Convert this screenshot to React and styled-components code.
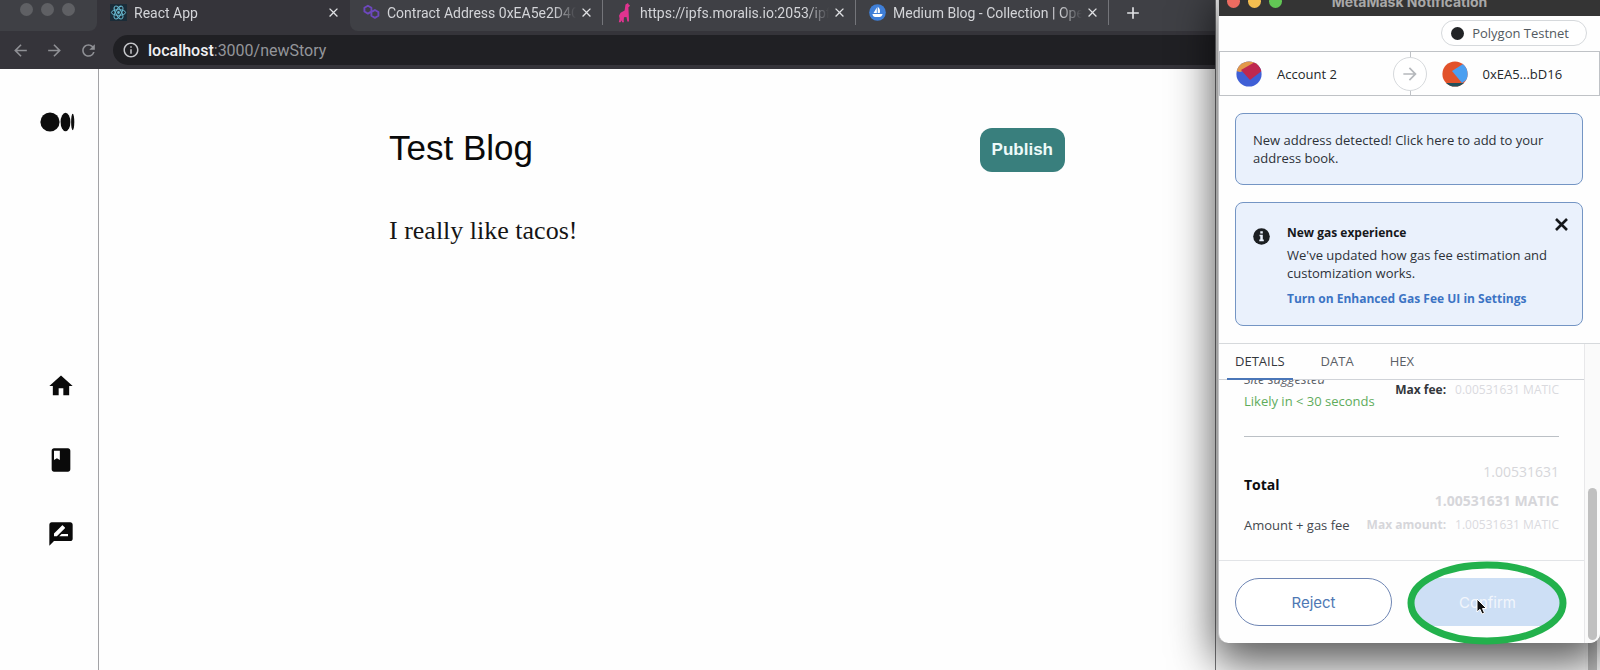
import React, { useState } from 'react';
import styled, { createGlobalStyle } from 'styled-components';
import { MdHome, MdBook, MdRateReview, MdRefresh, MdArrowBack, MdArrowForward, MdInfoOutline, MdClose, MdAdd } from 'react-icons/md';

const GlobalStyle = createGlobalStyle`
  * {
    box-sizing: border-box;
  }

  body {
    margin: 0;
    overflow: hidden;
    background: #fefefe;
    font-family: Roboto, "Liberation Sans", sans-serif;
  }

  button, input, textarea {
    font-family: inherit;
  }
`;

const Desktop = styled.div`
  display: flex;
  position: relative;
  min-height: 100vh;
  overflow: hidden;
`;

/* browser */

const Browser = styled.div`
  display: flex;
  flex-direction: column;
  flex: 1;
  min-width: 0;
  min-height: 100vh;
  border-right: 1px solid #77777a;
`;

const TabStrip = styled.div`
  display: flex;
  height: 31px;
  background: #35343a;
`;

const WindowControls = styled.div`
  display: flex;
  gap: 8px;
  width: 97px;
  padding: 3px 0 0 20px;
  background: #3f4045;
  border-bottom-right-radius: 8px;
`;

const Dot = styled.span`
  width: 13px;
  height: 13px;
  border-radius: 50%;
  background: ${({ color }) => color};
`;

const InactiveTabs = styled.div`
  display: flex;
  flex: 1;
  min-width: 0;
  background: #3f4045;
  border-bottom-left-radius: 8px;
`;

const BrowserTab = styled.div`
  display: flex;
  align-items: center;
  flex: 0 0 253px;
  min-width: 0;
  height: 25px;
  padding: 0 8px 0 13px;
  color: #d3d4d8;
  font-size: 14px;
  border-right: 1px solid ${({ $divided }) => ($divided ? '#74757a' : 'transparent')};
`;

const TabTitle = styled.span`
  flex: 1;
  min-width: 0;
  margin: 0 3px 0 7px;
  overflow: hidden;
  white-space: nowrap;
  mask-image: linear-gradient(to right, #000 88%, transparent);
`;

const IconButton = styled.button`
  display: flex;
  align-items: center;
  justify-content: center;
  padding: 0;
  border: none;
  background: none;
  color: ${({ color }) => color || 'inherit'};
`;

const NewTabButton = styled(IconButton)`
  width: 48px;
  height: 25px;
`;

const Toolbar = styled.div`
  display: flex;
  align-items: center;
  height: 38px;
  gap: 15px;
  padding: 0 0 0 11px;
  background: #35343a;
`;

const AddressBar = styled.div`
  display: flex;
  align-items: center;
  flex: 1;
  gap: 8px;
  height: 30px;
  padding-left: 9px;
  border-radius: 15px 0 0 15px;
  background: #202024;
  color: #c4c5c9;
`;

const Address = styled.span`
  font-size: 16px;
  color: #94959a;

  b {
    color: #f1f1f4;
    font-weight: 500;
  }
`;

const Page = styled.div`
  display: flex;
  flex: 1;
`;

const Sidebar = styled.nav`
  display: flex;
  flex-direction: column;
  align-items: center;
  width: 99px;
  padding: 43px 0 0 23px;
  border-right: 1px solid #a3a3a6;
  color: #0a0a0a;
`;

const SideLinks = styled.div`
  display: flex;
  flex-direction: column;
  gap: 46px;
  margin-top: 240px;
`;

const SideLink = styled.a`
  display: flex;
  color: inherit;
`;

const Story = styled.main`
  display: flex;
  align-items: flex-start;
  width: 676px;
  margin-left: 290px;
  padding-top: 59px;
`;

const StoryFields = styled.div`
  display: flex;
  flex-direction: column;
  flex: 1;
  gap: 40px;
`;

const TitleInput = styled.input`
  width: 100%;
  height: 40px;
  padding: 0;
  border: none;
  outline: none;
  background: none;
  color: #0a0a0a;
  font-family: "Liberation Sans", Arial, sans-serif;
  font-size: 35px;
`;

const StoryInput = styled.textarea`
  width: 100%;
  height: 60px;
  padding: 0;
  border: none;
  outline: none;
  resize: none;
  background: none;
  color: #151515;
  font-family: "Liberation Serif", serif;
  font-size: 26px;
  line-height: 46px;
`;

const PublishButton = styled.button`
  height: 44px;
  padding: 0 12px;
  border: none;
  border-radius: 12px;
  background: #397f7d;
  color: #eefafa;
  font-family: "Liberation Sans", Arial, sans-serif;
  font-size: 17px;
  font-weight: bold;
`;

/* the window that shows below the wallet */

const BackWindow = styled.div`
  display: flex;
  justify-content: flex-end;
  width: 384px;
  background: #fefefe;
`;

/* wallet window */

const WalletWindow = styled.section`
  position: absolute;
  top: -12px;
  right: 0;
  width: 382px;
  border-left: 1px solid #c4c4c6;
  border-radius: 10px;
  background: #fefefe;
  box-shadow: 0 16px 44px 4px rgba(0, 0, 0, 0.65);
  overflow: hidden;
  font-family: "Open Sans", "Liberation Sans", sans-serif;
`;

const WalletTitleBar = styled.header`
  display: grid;
  grid-template-columns: 1fr auto 1fr;
  align-items: center;
  height: 28px;
  padding: 0 8px 2px;
  background: #343434;
  color: #a8a8a8;
  font-family: Inter, "Liberation Sans", sans-serif;
  font-size: 14px;
  font-weight: 700;
`;

const Lights = styled.div`
  display: flex;
  gap: 8px;
`;

const NetworkRow = styled.div`
  display: flex;
  justify-content: flex-end;
  padding: 4px 13px 5px;
`;

const NetworkPill = styled.button`
  display: flex;
  align-items: center;
  gap: 8px;
  height: 26px;
  padding: 0 17px 0 9px;
  border: 1px solid #d6d9dc;
  border-radius: 13px;
  background: #fff;
  color: #535a61;
  font-size: 13px;
`;

const AccountsRow = styled.div`
  display: grid;
  grid-template-columns: 1fr 1fr;
  position: relative;
  height: 45px;
  border: 1px solid #bfc2c6;
`;

const Account = styled.div`
  display: flex;
  align-items: center;
  gap: 15px;
  padding-left: ${({ $recipient }) => ($recipient ? '31px' : '16px')};
  border-left: ${({ $recipient }) => ($recipient ? '1px solid #bfc2c6' : 'none')};
  color: #24272a;
  font-size: 13px;
`;

const ArrowCircle = styled.div`
  position: absolute;
  top: 5px;
  left: calc(50% - 17px);
  display: flex;
  align-items: center;
  justify-content: center;
  width: 34px;
  height: 34px;
  border: 1px solid #d6d9dc;
  border-radius: 50%;
  background: #fff;
  color: #b5b8bc;
`;

const Notices = styled.div`
  display: flex;
  flex-direction: column;
  gap: 17px;
  padding: 17px 17px 17px 16px;
`;

const Notice = styled.div`
  display: flex;
  align-items: flex-start;
  position: relative;
  gap: 17px;
  padding: ${({ $tall }) => ($tall ? '21px 30px 17px 17px' : '17px')};
  border: 1px solid #7495c4;
  border-radius: 8px;
  background: #eaf1fc;
  color: #2d3138;
  font-size: 13px;
  line-height: 18px;
`;

const NoticeBody = styled.div`
  flex: 1;

  h3, p {
    margin: 0 0 4px;
    font-size: 13px;
  }

  h3 {
    color: #16181b;
    font-size: 12px;
  }

  p {
    margin-bottom: 8px;
  }
`;

const SettingsLink = styled.a`
  display: block;
  color: #3c74c4;
  font-size: 12px;
  font-weight: 700;
  text-decoration: none;
`;

const DismissButton = styled(IconButton)`
  position: absolute;
  top: 15px;
  right: 14px;
`;

const InfoIcon = styled.svg`
  margin-top: 4px;
`;

const ScrollArea = styled.div`
  display: flex;
  border-top: 1px solid #d6d9dc;
`;

const ScrollContent = styled.div`
  flex: 1;
  min-width: 0;
  border-right: 1px solid #e8e8ea;
`;

const ScrollTrack = styled.div`
  display: flex;
  align-items: flex-end;
  width: 15px;
  padding: 0 3px ${({ $flush }) => ($flush ? '0' : '3px')};
  background: #fafafa;
`;

const ScrollThumb = styled.div`
  width: 9px;
  height: 152px;
  border-radius: 5px;
  background: #c0c0c0;
`;

const BackThumb = styled(ScrollThumb)`
  border-radius: 5px 5px 0 0;
`;

const DetailTabs = styled.div`
  display: flex;
  gap: 20px;
  height: 36px;
  padding-left: 8px;
  border-bottom: 1px solid #d0d3d8;
`;

const DetailTab = styled.button`
  height: 36px;
  padding: 0 8px;
  border: none;
  border-bottom: 2px solid ${({ $active }) => ($active ? '#4a76b8' : 'transparent')};
  background: none;
  color: ${({ $active }) => ($active ? '#33373c' : '#5b6067')};
  font-size: 13px;
`;

const Details = styled.div`
  height: 180px;
  padding: 0 25px;
  overflow: hidden;
  font-size: 13px;
  line-height: 18px;
  white-space: nowrap;
  color: #44484e;
`;

const GasBlock = styled.div`
  display: flex;
  justify-content: space-between;
  height: 57px;
  border-bottom: 1px solid #bbc0c5;
`;

const GasTiming = styled.div`
  display: flex;
  flex-direction: column;
  gap: 4px;
  margin-top: -10px;
  color: #5fac5c;

  i {
    color: #5b6067;
  }
`;

const Fee = styled.div`
  display: flex;
  gap: 9px;
  color: #dadade;
  font-size: 12px;
  line-height: 20px;

  b {
    color: ${({ $faded }) => ($faded ? '#d6d6da' : '#33373c')};
  }
`;

const TotalBlock = styled.div`
  display: flex;
  flex-direction: column;
  gap: 4px;
  padding-top: 25px;
`;

const TotalRow = styled.div`
  display: flex;
  align-items: center;
  justify-content: space-between;
`;

const Amounts = styled.div`
  display: flex;
  flex-direction: column;
  align-items: flex-end;
  gap: 9px;
`;

const Amount = styled.span`
  color: #d6d6da;
  font-size: 14px;
  line-height: 20px;
  font-weight: ${({ $bold }) => ($bold ? 700 : 400)};
`;

const TotalLabel = styled(Amount)`
  padding-bottom: 4px;
  color: #0c0d0e;
`;

const WalletFooter = styled.footer`
  display: grid;
  grid-template-columns: 1fr 1fr;
  gap: 17px;
  padding: 17px 18px 17px 16px;
  border-top: 1px solid #e2e4e7;
`;

const FooterButton = styled.button`
  height: 48px;
  border: 1px solid ${({ $primary }) => ($primary ? '#cddff5' : '#6f86b4')};
  border-radius: 24px;
  background: ${({ $primary }) => ($primary ? '#cddff5' : '#fff')};
  color: ${({ $primary }) => ($primary ? '#f2f6fc' : '#4f78b4')};
  font-family: Inter, "Liberation Sans", sans-serif;
  font-size: 15px;
`;

const Highlight = styled.svg`
  position: absolute;
  right: 33px;
  top: 561px;
`;

const Cursor = styled.svg`
  position: absolute;
  right: 112px;
  top: 598px;
`;

const ReactIcon = () => (
  <svg width="17" height="17" viewBox="0 0 24 24" fill="none" stroke="#68b9d0" strokeWidth="1.4">
    <rect width="24" height="24" fill="#1b2c38" stroke="none" />
    <circle cx="12" cy="12" r="2" fill="#68b9d0" stroke="none" />
    <ellipse cx="12" cy="12" rx="10" ry="4" />
    <ellipse cx="12" cy="12" rx="10" ry="4" transform="rotate(60 12 12)" />
    <ellipse cx="12" cy="12" rx="10" ry="4" transform="rotate(120 12 12)" />
  </svg>
);

const PolygonIcon = () => (
  <svg width="17" height="17" viewBox="0 0 18 18" fill="none" stroke="#6d48bd" strokeWidth="2" strokeLinejoin="round" strokeLinecap="round">
    <path d="M7.800 8.600 5.200 10.200 1.500 8V4L5.200 1.800 8.900 4v8.500l3.700 2.200 3.700-2.200v-4l-3.700-2.200L10.200 7.800" />
  </svg>
);

const MoralisIcon = () => (
  <svg width="17" height="20" viewBox="0 0 17 20" fill="#e0338f">
    <path d="M9.500 1.500 12 0l.6 1.500 1.400.8-.8 1.500-.8.400.400 8.300.200 6h-1.700l-.8-4.500-2.500.200-.3 3.300.3 1.800H6l-.2-2-1.300 2H2.800l.8-3.800-.6-2.800 1.600-3 4-2.200z" />
  </svg>
);

const OpenSeaIcon = () => (
  <svg width="17" height="17" viewBox="0 0 18 18">
    <circle cx="9" cy="9" r="8.800" fill="#3f7fd8" />
    <path d="M8.300 3.600v6H4.800zM9.200 3c2.200 1.600 3 4 2.200 6.500H9.200zM3.600 10.500h10.800c-.5 2-1.600 3.200-3.200 3.200H6.600c-1.600 0-2.600-1.200-3-3.200z" fill="#fff" />
  </svg>
);

const MediumLogo = () => (
  <svg width="42" height="20" viewBox="0 0 42 20" fill="#0d0d0d">
    <circle cx="10" cy="10" r="9.600" />
    <ellipse cx="25.500" cy="10" rx="4.900" ry="9.300" />
    <ellipse cx="32.700" cy="10" rx="1.600" ry="8.300" />
  </svg>
);

const SenderAvatar = () => (
  <svg width="26" height="26" viewBox="0 0 26 26">
    <clipPath id="sender"><circle cx="13" cy="13" r="12.600" /></clipPath>
    <g clipPath="url(#sender)">
      <rect width="26" height="26" fill="#3f5fd6" />
      <path d="M0 0h26v4L4 11 0 10z" fill="#e2984a" />
      <path d="M5 9 19 1l8 8-13 10z" fill="#bf2850" />
    </g>
  </svg>
);

const RecipientAvatar = () => (
  <svg width="26" height="26" viewBox="0 0 26 26">
    <clipPath id="recipient"><circle cx="13" cy="13" r="12.600" /></clipPath>
    <g clipPath="url(#recipient)">
      <rect width="26" height="26" fill="#e2522a" />
      <path d="M21 3 10 10l10 12 6-4V3z" fill="#4c9ff0" />
      <path d="M0 22h26v4H0z" fill="#21505c" />
    </g>
  </svg>
);

const tabs = [
  { title: 'Contract Address 0xEA5e2D4C', icon: <PolygonIcon /> },
  { title: 'https://ipfs.moralis.io:2053/ipfs', icon: <MoralisIcon /> },
  { title: 'Medium Blog - Collection | Ope', icon: <OpenSeaIcon /> },
];

const Tab = ({ title, icon, divided }) => (
  <BrowserTab $divided={divided}>
    {icon}
    <TabTitle>{title}</TabTitle>
    <IconButton aria-label={`Close ${title}`} color="#e0e1e4"><MdClose size={15} /></IconButton>
  </BrowserTab>
);

const Wallet = () => (
  <WalletWindow>
    <WalletTitleBar>
      <Lights>
        <Dot color="#ec6b60" />
        <Dot color="#f4be50" />
        <Dot color="#62c655" />
      </Lights>
      MetaMask Notification
    </WalletTitleBar>
    <NetworkRow>
      <NetworkPill><Dot color="#222426" />Polygon Testnet</NetworkPill>
    </NetworkRow>
    <AccountsRow>
      <Account><SenderAvatar />Account 2</Account>
      <Account $recipient><RecipientAvatar />0xEA5...bD16</Account>
      <ArrowCircle><MdArrowForward size={20} /></ArrowCircle>
    </AccountsRow>
    <Notices>
      <Notice>New address detected! Click here to add to your address book.</Notice>
      <Notice $tall>
        <InfoIcon width="17" height="17" viewBox="0 0 17 17">
          <circle cx="8.500" cy="8.500" r="8.300" fill="#1c1f22" />
          <path d="M7.300 3.300h2.500v2.200H7.300zM6.500 6.800h3.300v4.700h1v1.700H6.300v-1.700h1V8.300h-.8z" fill="#eaf1fc" />
        </InfoIcon>
        <NoticeBody>
          <h3>New gas experience</h3>
          <p>We've updated how gas fee estimation and customization works.</p>
          <SettingsLink href="#settings">Turn on Enhanced Gas Fee UI in Settings</SettingsLink>
        </NoticeBody>
        <DismissButton aria-label="Dismiss" color="#16181b">
          <svg width="13" height="13" viewBox="0 0 13 13" stroke="currentColor" strokeWidth="2.600"><path d="m1 1 11 11M12 1 1 12" /></svg>
        </DismissButton>
      </Notice>
    </Notices>
    <ScrollArea>
      <ScrollContent>
        <DetailTabs>
          <DetailTab $active>DETAILS</DetailTab>
          <DetailTab>DATA</DetailTab>
          <DetailTab>HEX</DetailTab>
        </DetailTabs>
        <Details>
          <GasBlock>
            <GasTiming>
              <i>Site suggested</i>
              <span>Likely in &lt; 30 seconds</span>
            </GasTiming>
            <Fee><b>Max fee:</b>0.00531631 MATIC</Fee>
          </GasBlock>
          <TotalBlock>
            <TotalRow>
              <TotalLabel $bold>Total</TotalLabel>
              <Amounts>
                <Amount>1.00531631</Amount>
                <Amount $bold>1.00531631 MATIC</Amount>
              </Amounts>
            </TotalRow>
            <TotalRow>
              <span>Amount + gas fee</span>
              <Fee $faded><b>Max amount:</b>1.00531631 MATIC</Fee>
            </TotalRow>
          </TotalBlock>
        </Details>
        <WalletFooter>
          <FooterButton>Reject</FooterButton>
          <FooterButton $primary>Confirm</FooterButton>
        </WalletFooter>
      </ScrollContent>
      <ScrollTrack><ScrollThumb /></ScrollTrack>
    </ScrollArea>
  </WalletWindow>
);

const App = () => {
  const [title, setTitle] = useState('Test Blog');
  const [story, setStory] = useState('I really like tacos!');

  return (
    <Desktop>
      <GlobalStyle />
      <Browser>
        <TabStrip>
          <WindowControls>
            <Dot color="#5f6064" />
            <Dot color="#5f6064" />
            <Dot color="#5f6064" />
          </WindowControls>
          <Tab title="React App" icon={<ReactIcon />} />
          <InactiveTabs>
            {tabs.map((tab) => <Tab key={tab.title} divided {...tab} />)}
            <NewTabButton aria-label="New tab" color="#e0e1e4"><MdAdd size={20} /></NewTabButton>
          </InactiveTabs>
        </TabStrip>
        <Toolbar>
          <IconButton aria-label="Back" color="#8f9095"><MdArrowBack size={19} /></IconButton>
          <IconButton aria-label="Forward" color="#8f9095"><MdArrowForward size={19} /></IconButton>
          <IconButton aria-label="Reload" color="#8f9095"><MdRefresh size={19} /></IconButton>
          <AddressBar>
            <MdInfoOutline size={18} />
            <Address><b>localhost</b>:3000/newStory</Address>
          </AddressBar>
        </Toolbar>
        <Page>
          <Sidebar>
            <MediumLogo />
            <SideLinks>
              <SideLink href="#home" aria-label="Home"><MdHome size={28} /></SideLink>
              <SideLink href="#stories" aria-label="Stories"><MdBook size={28} /></SideLink>
              <SideLink href="#write" aria-label="Write"><MdRateReview size={28} /></SideLink>
            </SideLinks>
          </Sidebar>
          <Story>
            <StoryFields>
              <TitleInput aria-label="Title" value={title} onChange={(e) => setTitle(e.target.value)} />
              <StoryInput aria-label="Story" value={story} onChange={(e) => setStory(e.target.value)} />
            </StoryFields>
            <PublishButton>Publish</PublishButton>
          </Story>
        </Page>
      </Browser>
      <BackWindow>
        <ScrollTrack $flush><BackThumb /></ScrollTrack>
      </BackWindow>
      <Wallet />
      <Highlight width="160" height="84" viewBox="0 0 160 84" fill="none">
        <ellipse cx="80" cy="42" rx="76" ry="38" stroke="#22b14c" strokeWidth="7" />
      </Highlight>
      <Cursor width="12" height="18" viewBox="0 0 12 18">
        <path d="M1 1v13l3-2.700 2 4.700 2.500-1-2-4.500h4z" fill="#111" stroke="#fff" strokeWidth="1" />
      </Cursor>
    </Desktop>
  );
};

export default App;
